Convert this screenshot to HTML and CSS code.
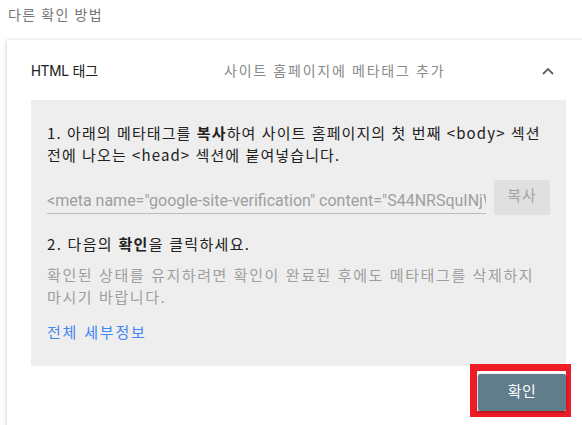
FILE: index.html
```html
<!DOCTYPE html>
<html lang="ko">
<head>
<meta charset="utf-8">
<link rel="stylesheet" href="styles.css">
</head>
<body>
<div class="page">
  <div class="section-title">다른 확인 방법</div>
  <div class="card">
    <div class="card-header">
      <div class="method-name">HTML 태그</div>
      <div class="method-desc">사이트 홈페이지에 메타태그 추가</div>
      <svg class="chevron" width="12" height="8" viewBox="0 0 12 8"><path d="M1 7 L6 2 L11 7" fill="none" stroke="#616161" stroke-width="1.8"/></svg>
    </div>
    <div class="panel">
      <p class="step">1. 아래의 메타태그를 <b>복사</b>하여 사이트 홈페이지의 첫 번째 &lt;body&gt; 섹션 전에 나오는 &lt;head&gt; 섹션에 붙여넣습니다.</p>
      <div class="copy-row">
        <div class="meta-input">&lt;meta name="google-site-verification" content="S44NRSquINjWx7vQ" /&gt;</div>
        <div class="copy-btn">복사</div>
      </div>
      <p class="step step-two">2. 다음의 <b>확인</b>을 클릭하세요.</p>
      <p class="note">확인된 상태를 유지하려면 확인이 완료된 후에도 메타태그를 삭제하지 마시기 바랍니다.</p>
      <a class="details">전체 세부정보</a>
    </div>
    <div class="actions">
      <div class="highlight">
        <div class="verify-btn">확인</div>
      </div>
    </div>
  </div>
</div>
</body>
</html>
```
FILE: styles.css
```css
html, body {
  margin: 0;
  padding: 0;
  background: #ffffff;
  overflow: hidden;
}
body {
  font-family: Roboto, "Noto Sans CJK KR", sans-serif;
  width: 582px;
  height: 425px;
}
.page {
  width: 582px;
}
.section-title {
  font-size: 14px;
  letter-spacing: 1.35px;
  color: #757575;
  padding: 5px 0 0 8px;
  line-height: 20px;
  height: 35px;
}
.card {
  margin-left: 7px;
  width: 600px;
  height: 420px;
  background: #fff;
  box-shadow: 0 1px 4px rgba(0,0,0,0.25);
  box-sizing: border-box;
  padding-left: 24px;
}
.card-header {
  height: 60px;
  display: flex;
  align-items: center;
  width: 535px;
}
.method-name {
  font-size: 14px;
  color: #212121;
  width: 193px;
}
.method-desc {
  font-size: 14px;
  letter-spacing: 1.8px;
  color: #8a8a8a;
}
.chevron {
  margin-left: auto;
  margin-right: 12px;
  margin-top: 2px;
}
.panel {
  width: 535px;
  box-sizing: border-box;
  background: #eeeeee;
  padding: 22px 16px 14px 16px;
  height: 266px;
}
.step, .note, .details {
  font-family: "Noto Sans CJK KR", Roboto, sans-serif;
  word-break: keep-all;
}
.step {
  margin: 0;
  font-size: 15px;
  letter-spacing: 1.1px;
  line-height: 22px;
  color: #212121;
}
.step-two {
  letter-spacing: 1.3px;
}
.step b {
  font-weight: 700;
}
.copy-row {
  display: flex;
  align-items: flex-start;
  margin-top: 14px;
  margin-bottom: 18px;
}
.meta-input {
  width: 439px;
  font-size: 16px;
  color: #9e9e9e;
  white-space: nowrap;
  overflow: hidden;
  border-bottom: 1px solid #bdbdbd;
  line-height: 22px;
  padding-top: 10px;
  height: 23px;
}
.copy-btn {
  margin-left: 8px;
  width: 56px;
  height: 35px;
  background: #e0e0e0;
  border-radius: 2px;
  color: #a3a3a3;
  font-size: 15px;
  letter-spacing: 1px;
  text-align: center;
  line-height: 32px;
}
.note {
  margin: 9px 0 0 0;
  font-size: 15px;
  letter-spacing: 1.6px;
  line-height: 22px;
  color: #9e9e9e;
}
.details {
  display: block;
  margin-top: 13px;
  font-size: 15px;
  letter-spacing: 1.8px;
  line-height: 22px;
  color: #4285f4;
}
.actions {
  width: 540px;
  display: flex;
  justify-content: flex-end;
  margin-top: -2px;
}
.highlight {
  border: 7px solid #ee1c24;
  border-right-width: 5px;
  border-bottom-width: 6px;
  padding: 3px 0 0 1px;
}
.verify-btn {
  width: 88px;
  height: 37px;
  background: #607d8b;
  color: #fff;
  font-size: 15px;
  letter-spacing: 0.5px;
  text-align: center;
  line-height: 37px;
  border-radius: 2px;
  box-shadow: 0 1px 3px rgba(0,0,0,0.35);
}
```
